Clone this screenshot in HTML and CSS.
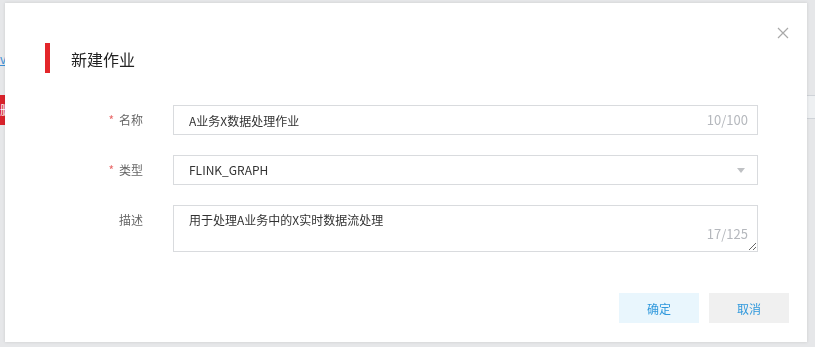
FILE: index.html
```html
<!DOCTYPE html>
<html lang="zh-CN">
<head>
    <meta charset="UTF-8">
    <meta name="viewport" content="width=device-width, initial-scale=1.0">
    <title>新建作业</title>
    <link rel="stylesheet" href="styles.css">
</head>
<body>
    <div class="page">
        <a class="page-link" href="#">view</a>
        <div class="page-tag">删除</div>
        <div class="page-table">
            <div class="page-head"></div>
        </div>
    </div>

    <div class="modal">
        <div class="modal-header">
            <h2 class="modal-title">新建作业</h2>
            <button class="modal-close" aria-label="close">
                <svg width="12" height="12" viewBox="0 0 12 12">
                    <path d="M1 1 L11 11 M11 1 L1 11" stroke="#a9a9a9" stroke-width="1.2" fill="none"/>
                </svg>
            </button>
        </div>

        <form class="form">
            <label class="form-label required">名称</label>
            <div class="field">
                <input class="input" type="text" value="A业务X数据处理作业">
                <span class="count">10/100</span>
            </div>

            <label class="form-label required">类型</label>
            <div class="field">
                <div class="select">FLINK_GRAPH</div>
                <span class="arrow"></span>
            </div>

            <label class="form-label">描述</label>
            <div class="field">
                <textarea class="textarea">用于处理A业务中的X实时数据流处理</textarea>
                <span class="count count-area">17/125</span>
            </div>
        </form>

        <div class="modal-footer">
            <button class="btn btn-primary">确定</button>
            <button class="btn btn-default">取消</button>
        </div>
    </div>
</body>
</html>
```

FILE: styles.css
```css
body {
    margin: 0;
    background-color: #e6e7e9;
    font-family: "Noto Sans CJK SC", "Liberation Sans", sans-serif;
    font-size: 12px;
    color: #333;
    height: 347px;
    overflow: hidden;
}
.page {
    padding-top: 52px;
}
.page-link {
    display: block;
    color: #3b8fd6;
    font-size: 12px;
    line-height: 14px;
}
.page-tag {
    margin-top: 29px;
    width: 40px;
    height: 30px;
    background: #d9232b;
    color: white;
    line-height: 30px;
}
.page-table {
    margin-top: -30px;
    display: flex;
    justify-content: flex-end;
}
.page-head {
    width: 10px;
    height: 22px;
    border-top: 1px solid #cfd3d8;
    border-bottom: 1px solid #cfd3d8;
    background: #eef0f2;
}

/* dialog */
.modal {
    position: fixed;
    left: 5px;
    top: 3px;
    width: 802px;
    height: 339px;
    background: white;
    box-shadow: 0 0 3px rgba(0,0,0,0.12);
    display: flex;
    flex-direction: column;
}
.modal-header {
    display: flex;
    justify-content: space-between;
    align-items: flex-start;
    padding: 24px 18px 0 40px;
}
.modal-title {
    margin: 16px 0 0;
    height: 30px;
    border-left: 5px solid #e3262a;
    padding-left: 21px;
    font-size: 16px;
    font-weight: normal;
    line-height: 32px;
    color: #222;
}
.modal-close {
    border: none;
    background: none;
    padding: 0;
    width: 12px;
    height: 12px;
    cursor: pointer;
    display: flex;
}
.form {
    display: grid;
    grid-template-columns: 138px 1fr;
    column-gap: 30px;
    row-gap: 20px;
    margin-top: 32px;
    padding-right: 49px;
}
.form-label {
    text-align: right;
    line-height: 30px;
    color: #666;
}
.form-label.required::before {
    content: "*";
    color: #e96b6b;
    margin-right: 5px;
}
.field {
    position: relative;
    display: flex;
}
.input, .select, .textarea {
    flex: 1;
    box-sizing: border-box;
    border: 1px solid #d9dbde;
    font-family: inherit;
    font-size: 12px;
    color: #333;
    padding: 0 15px;
    margin: 0;
    outline: none;
}
.input, .select {
    height: 30px;
    line-height: 28px;
}
.textarea {
    height: 47px;
    padding-top: 5px;
    line-height: 18px;
    resize: vertical;
}
.count {
    position: absolute;
    right: 10px;
    top: 0;
    font-size: 13px;
    line-height: 30px;
    color: #b5b8bd;
}
.count-area {
    top: auto;
    bottom: 11px;
    line-height: 14px;
}
.arrow {
    position: absolute;
    right: 13px;
    top: 13px;
    border-left: 4px solid transparent;
    border-right: 4px solid transparent;
    border-top: 5px solid #bfc1c4;
}
.modal-footer {
    display: flex;
    justify-content: flex-end;
    gap: 10px;
    margin-top: 41px;
    padding-right: 18px;
}
.btn {
    width: 80px;
    height: 30px;
    border: none;
    font-family: inherit;
    font-size: 12px;
    color: #2f98dc;
    cursor: pointer;
}
.btn-primary {
    background-color: #e9f6fd;
}
.btn-default {
    background-color: #f0f0f0;
}
```
